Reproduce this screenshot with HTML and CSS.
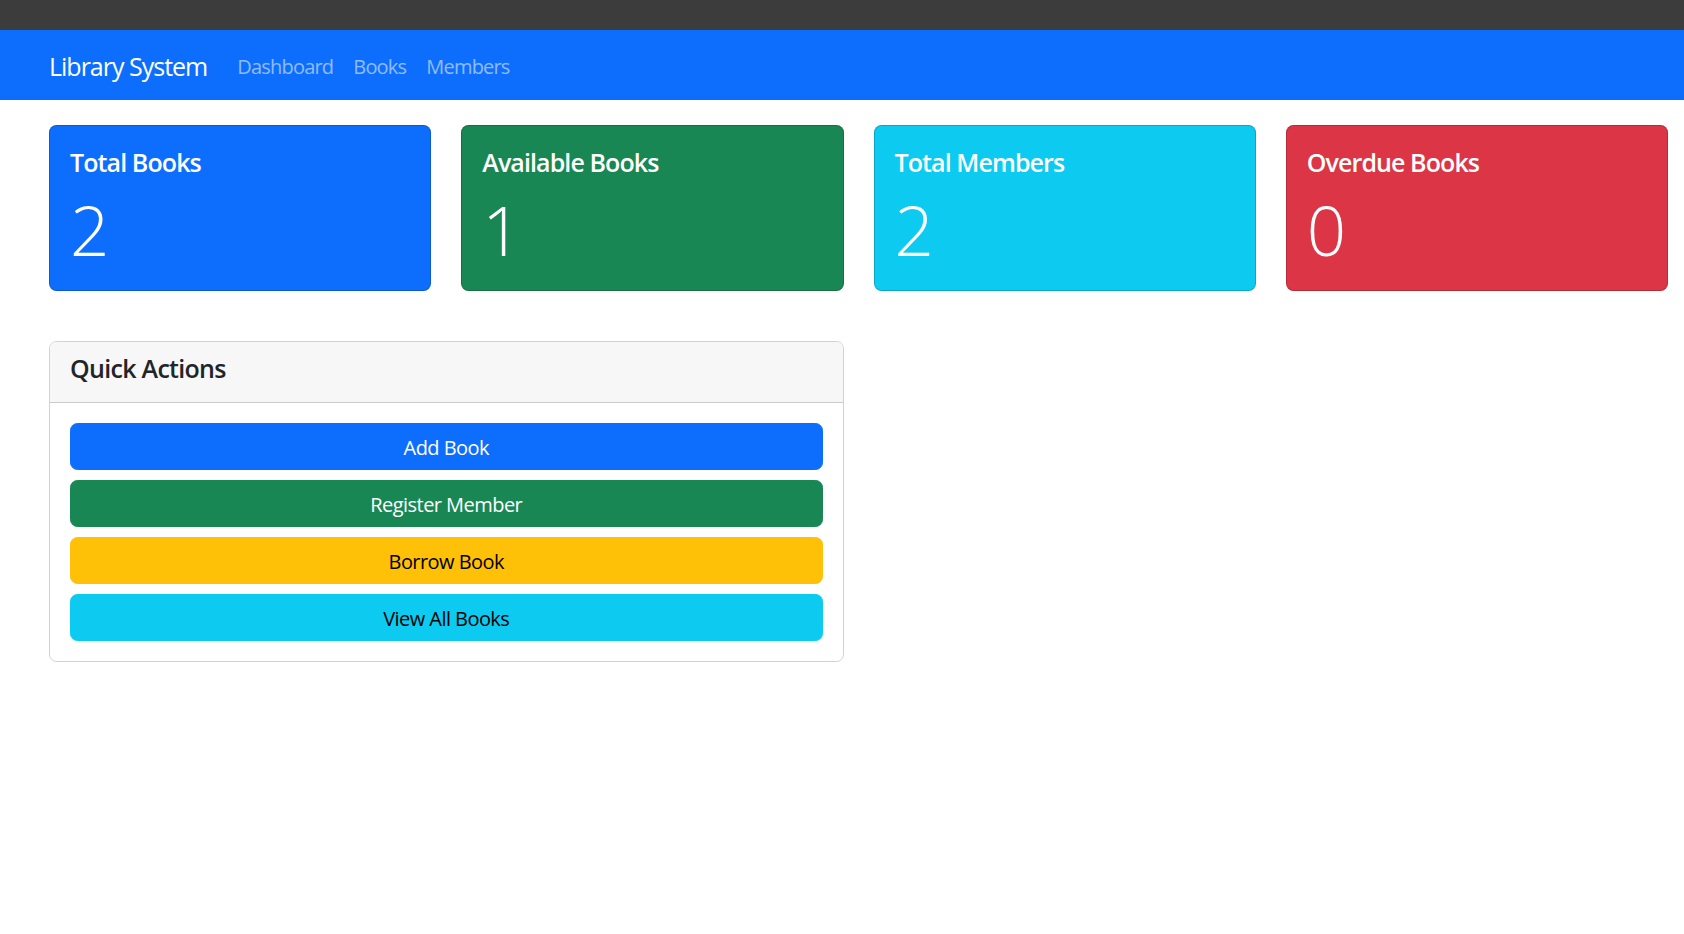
FILE: index.html
```html
<!DOCTYPE html>
<html lang="en">
<head>
<meta charset="utf-8">
<title>Library System</title>
<link rel="stylesheet" href="styles.css">
</head>
<body>
<div class="topbar"></div>
<nav class="navbar">
  <a class="brand" href="#">Library System</a>
  <ul class="nav">
    <li><a href="#">Dashboard</a></li>
    <li><a href="#">Books</a></li>
    <li><a href="#">Members</a></li>
  </ul>
</nav>
<main class="container">
  <section class="stats">
    <div class="stat stat-primary">
      <h5 class="stat-title">Total Books</h5>
      <p class="stat-value">2</p>
    </div>
    <div class="stat stat-success">
      <h5 class="stat-title">Available Books</h5>
      <p class="stat-value">1</p>
    </div>
    <div class="stat stat-info">
      <h5 class="stat-title">Total Members</h5>
      <p class="stat-value">2</p>
    </div>
    <div class="stat stat-danger">
      <h5 class="stat-title">Overdue Books</h5>
      <p class="stat-value">0</p>
    </div>
  </section>
  <section class="lower">
    <div class="panel">
      <div class="panel-header">
        <h5 class="panel-title">Quick Actions</h5>
      </div>
      <div class="panel-body">
        <a class="btn btn-primary" href="#">Add Book</a>
        <a class="btn btn-success" href="#">Register Member</a>
        <a class="btn btn-warning" href="#">Borrow Book</a>
        <a class="btn btn-info" href="#">View All Books</a>
      </div>
    </div>
  </section>
</main>
</body>
</html>
```
FILE: styles.css
```css
* { box-sizing: border-box; }

html, body {
  margin: 0;
  padding: 0;
  background: #fff;
}

body {
  font-family: "Segoe UI", "Open Sans", "Noto Sans", "Liberation Sans", sans-serif;
  font-size: 20px;
  line-height: 1.5;
  color: #212529;
}

.topbar {
  height: 30px;
  background: #3c3c3c;
}

.navbar {
  height: 70px;
  background: #0d6efd;
  display: flex;
  align-items: center;
  padding: 3px 0 0 49px;
}

.brand {
  font-size: 25px;
  color: #fff;
  text-decoration: none;
  margin-right: 20px;
  line-height: 1.5;
  letter-spacing: -1px;
}

.nav {
  list-style: none;
  display: flex;
  margin: 0;
  padding: 0;
}

.nav a {
  display: block;
  padding: 8px 10px;
  color: rgba(255, 255, 255, 0.55);
  text-decoration: none;
  font-size: 20px;
  letter-spacing: -0.8px;
}

.container {
  padding: 25px 16px 0 49px;
}

.stats {
  display: grid;
  grid-template-columns: repeat(4, 1fr);
  gap: 30px;
}

.stat {
  border: 1px solid rgba(0, 0, 0, 0.175);
  border-radius: 7.5px;
  padding: 21px 20px 19px;
  color: #fff;
}

.stat-primary { background: #0d6efd; }
.stat-success { background: #198754; }
.stat-info { background: #0dcaf0; }
.stat-danger { background: #dc3545; }

.stat-title {
  margin: 0 0 10px;
  font-size: 25px;
  font-weight: 600;
  line-height: 1.2;
  letter-spacing: -0.9px;
}

.stat-value {
  margin: 0;
  font-size: 69px;
  font-weight: 300;
  line-height: 84px;
  letter-spacing: -1px;
}

.lower {
  display: grid;
  grid-template-columns: 1fr 1fr;
  gap: 30px;
  margin-top: 50px;
}

.panel {
  border: 1px solid rgba(0, 0, 0, 0.175);
  border-radius: 7.5px;
  overflow: hidden;
}

.panel-header {
  background: #f7f7f7;
  border-bottom: 1px solid rgba(0, 0, 0, 0.175);
  padding: 11px 20px 9px;
}

.panel-title {
  margin: 0 0 10px;
  font-size: 25px;
  font-weight: 600;
  line-height: 1.2;
  letter-spacing: -0.7px;
}

.panel-body {
  padding: 20px;
  display: grid;
  gap: 10px;
}

.btn {
  display: block;
  text-align: center;
  text-decoration: none;
  font-size: 20px;
  line-height: 30px;
  padding: 9px 15px 6px;
  border: 1px solid transparent;
  border-radius: 7.5px;
  letter-spacing: -0.55px;
}

.btn-primary { background: #0d6efd; border-color: #0d6efd; color: #fff; }
.btn-success { background: #198754; border-color: #198754; color: #fff; }
.btn-warning { background: #ffc107; border-color: #ffc107; color: #000; }
.btn-info { background: #0dcaf0; border-color: #0dcaf0; color: #000; }
```
